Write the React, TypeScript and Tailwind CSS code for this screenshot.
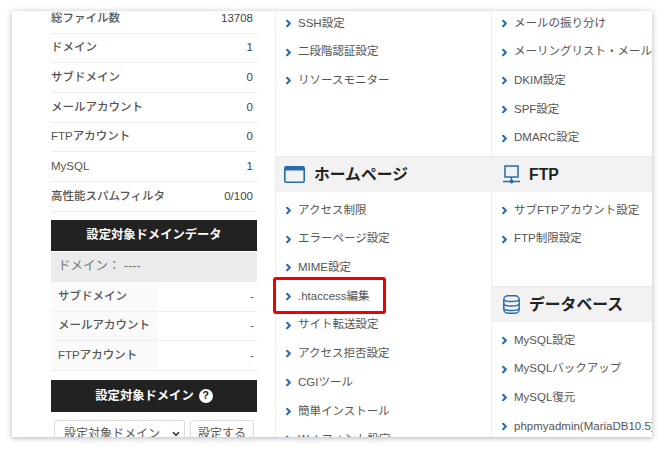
import { ChevronRight } from "lucide-react";
import type { ReactNode } from "react";

const stats = [
  ["総ファイル数", "13708"],
  ["ドメイン", "1"],
  ["サブドメイン", "0"],
  ["メールアカウント", "0"],
  ["FTPアカウント", "0"],
  ["MySQL", "1"],
  ["高性能スパムフィルタ", "0/100"],
];

const targetStats = ["サブドメイン", "メールアカウント", "FTPアカウント"];

function MenuItem({ label, marked }: { label: string; marked?: boolean }) {
  return (
    <li className="relative flex h-[28.7px] items-center whitespace-nowrap pl-[7px] text-[11.5px] text-[#555]">
      <ChevronRight size={11} strokeWidth={4.5} className="mr-[4px] shrink-0 text-[#2a6aa8]" />
      {label}
      {marked && (
        <span className="absolute top-[-5px] bottom-[-3px] left-[-3px] w-[113px] rounded-[3px] border-[3px] border-[#f00000]" />
      )}
    </li>
  );
}

function SectionHead({ icon, label, right }: { icon: ReactNode; label: string; right?: boolean }) {
  return (
    <div className={`flex h-[36px] items-center border-t border-[#e8e8e8] bg-[#f2f2f2] font-bold text-[#222] ${right ? "pl-[11px]" : "pl-[8px]"}`}>
      {icon}
      <span className="ml-[9px] text-[15.8px]">{label}</span>
    </div>
  );
}

function WindowIcon() {
  return (
    <svg width="21" height="17" viewBox="0 0 21 17" fill="none" className="shrink-0">
      <rect x="0.8" y="0.8" width="19.4" height="15.4" rx="1.5" stroke="#2a6aa8" strokeWidth="1.6" />
      <rect x="1" y="1" width="19" height="3.5" fill="#2a6aa8" />
    </svg>
  );
}

function MonitorIcon() {
  return (
    <svg width="17" height="19" viewBox="0 0 17 19" fill="none" className="shrink-0">
      <rect x="2" y="1" width="13" height="11" stroke="#2a6aa8" strokeWidth="1.5" />
      <path d="M8.5 12v5M0 16.5h17" stroke="#2a6aa8" strokeWidth="1.4" />
      <circle cx="8.5" cy="16.5" r="2" fill="#2a6aa8" />
    </svg>
  );
}

function DatabaseIcon() {
  return (
    <svg width="17" height="19" viewBox="0 0 17 19" fill="none" className="shrink-0">
      <rect x="0.8" y="0.8" width="15.4" height="17.4" rx="4" stroke="#2a6aa8" strokeWidth="1.5" />
      <path d="M1 5c2 2 13 2 15 0M1 9.5c2 2 13 2 15 0M1 14c2 2 13 2 15 0" stroke="#2a6aa8" strokeWidth="1.4" />
    </svg>
  );
}

export default function App() {
  return (
    <main className="h-[450px] w-[664px] overflow-hidden bg-white pt-[11px] pb-[13px] pl-[12px] pr-[12px] font-['Liberation_Sans','Noto_Sans_CJK_JP',sans-serif]">
      <div className="flex h-[426px] overflow-hidden bg-white shadow-[0_1px_6px_rgba(0,0,0,0.3)]">
        <aside className="ml-[39px] w-[206px] shrink-0">
          <div className="-mt-[7px]">
            {stats.map(([name, value]) => (
              <div
                key={name}
                className="flex h-[29.7px] items-center justify-between border-b border-[#eee] pr-[4px] text-[11.5px] text-[#444]"
              >
                <span className="font-medium text-[#555]">{name}</span>
                <span>{value}</span>
              </div>
            ))}
          </div>
          <div className="mt-[8px] flex h-[32px] items-center justify-center border-b border-white bg-[#222] text-[12.3px] font-bold text-white">
            設定対象ドメインデータ
          </div>
          <div className="flex h-[30px] items-center bg-[#ebebeb] pl-[7px] text-[12.5px] text-[#777]">ドメイン： ----</div>
          {targetStats.map((name) => (
            <div key={name} className="flex h-[29.7px] items-stretch border-b border-[#eee] text-[11.5px]">
              <span className="flex w-[107px] items-center bg-[#fafafa] pl-[7px] font-medium text-[#555]">{name}</span>
              <span className="flex flex-1 items-center justify-end pr-[3px] text-[#555]">-</span>
            </div>
          ))}
          <div className="mt-[9px] flex h-[32px] items-center justify-center gap-[5px] bg-[#222] text-[12.3px] font-bold text-white">
            設定対象ドメイン
            <span className="flex size-[14px] items-center justify-center rounded-full bg-white text-[11px] leading-none text-[#222]">?</span>
          </div>
          <div className="mt-[8px] flex gap-[5px] pl-[3px]">
            <div className="flex h-[30px] w-[131px] items-start justify-between rounded-[2px] border border-[#ddd] pr-[3px] pl-[9px] pt-[4px] text-[12px] text-[#555]">
              設定対象ドメイン
              <ChevronRight size={10} strokeWidth={4} className="mt-[4px] rotate-90 text-[#333]" />
            </div>
            <div className="flex h-[30px] w-[64px] items-start justify-center rounded-[3px] border border-[#ddd] pt-[4px] text-[12px] text-[#555]">
              設定する
            </div>
          </div>
        </aside>

        <section className="ml-[18px] w-[217px] shrink-0 border-x border-[#eee]">
          <ul className="h-[147px] -mt-[2px]">
            <MenuItem label="SSH設定" />
            <MenuItem label="二段階認証設定" />
            <MenuItem label="リソースモニター" />
          </ul>
          <SectionHead icon={<WindowIcon />} label="ホームページ" />
          <ul className="mt-[4px]">
            <MenuItem label="アクセス制限" />
            <MenuItem label="エラーページ設定" />
            <MenuItem label="MIME設定" />
            <MenuItem label=".htaccess編集" marked />
            <MenuItem label="サイト転送設定" />
            <MenuItem label="アクセス拒否設定" />
            <MenuItem label="CGIツール" />
            <MenuItem label="簡単インストール" />
            <MenuItem label="Webフォント設定" />
          </ul>
        </section>

        <section className="min-w-0 flex-1 overflow-hidden">
          <ul className="h-[147px] -mt-[2px]">
            <MenuItem label="メールの振り分け" />
            <MenuItem label="メーリングリスト・メールマガジン" />
            <MenuItem label="DKIM設定" />
            <MenuItem label="SPF設定" />
            <MenuItem label="DMARC設定" />
          </ul>
          <SectionHead icon={<MonitorIcon />} label="FTP" right />
          <ul className="mt-[4px] h-[90px]">
            <MenuItem label="サブFTPアカウント設定" />
            <MenuItem label="FTP制限設定" />
          </ul>
          <SectionHead icon={<DatabaseIcon />} label="データベース" right />
          <ul className="mt-[4px]">
            <MenuItem label="MySQL設定" />
            <MenuItem label="MySQLバックアップ" />
            <MenuItem label="MySQL復元" />
            <MenuItem label="phpmyadmin(MariaDB10.5)" />
          </ul>
        </section>
      </div>
    </main>
  );
}
